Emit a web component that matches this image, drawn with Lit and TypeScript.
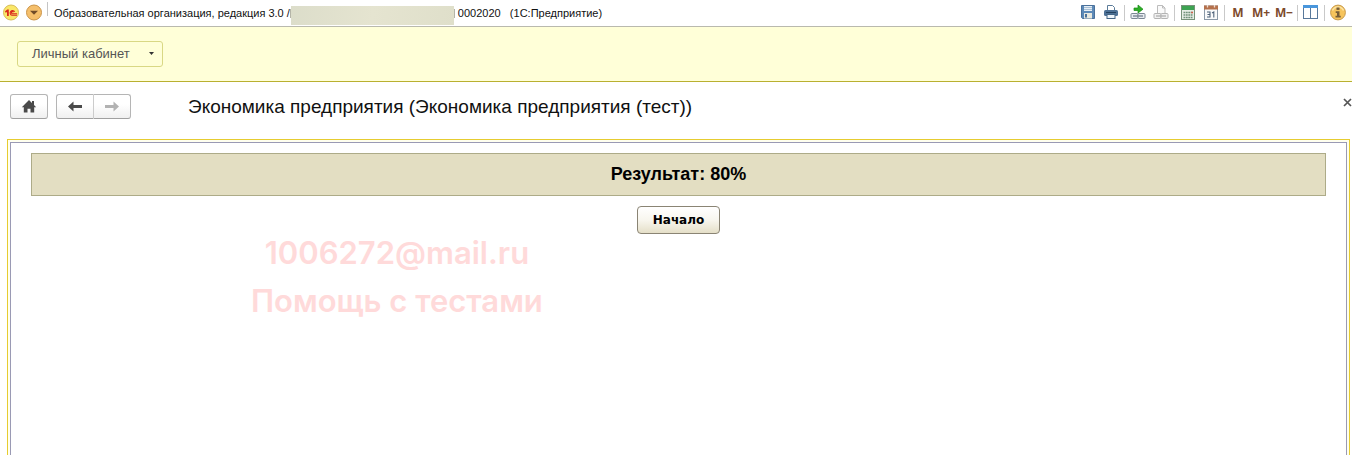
import { LitElement, html, css, svg, type TemplateResult, type SVGTemplateResult } from "lit";
import { customElement } from "lit/decorators.js";

interface Tool {
  label: string;
  icon?: SVGTemplateResult;
  text?: string;
}

const chain = (stroke: string, fill: string) => svg`
  <rect x="1" y="9.5" width="7" height="5" rx="1" fill=${fill} stroke=${stroke}/>
  <rect x="8" y="9.5" width="7" height="5" rx="1" fill=${fill} stroke=${stroke}/>
  <path d="M3 12h10" stroke=${stroke} stroke-width="1.4"/>`;

const toolGroups: Tool[][] = [
  [
    {
      label: "Сохранить",
      icon: svg`<path d="M1.5 .5h13v13h-12l-1-1z" fill="#5d8ab8" stroke="#4a719b"/>
        <rect x="4" y="1" width="8" height="5" fill="#e6eef5"/><path d="M4 2.5h8M4 4.500h8" stroke="#a9c0d5"/>
        <rect x="4" y="8" width="8" height="5.5" fill="#e9e9df"/><rect x="5" y="9" width="2" height="3.5" fill="#4a719b"/>`,
    },
    {
      label: "Печать",
      icon: svg`<path d="M4.500 6V.5h5l2 2V6" fill="#fff" stroke="#5b7b99"/>
        <rect x="1" y="5" width="14" height="6" rx="1.5" fill="#4d7196"/><path d="M3 7.500h10" stroke="#22415f"/>
        <rect x="4" y="9.500" width="8" height="4" fill="#eef5fb" stroke="#456787"/>`,
    },
  ],
  [
    {
      label: "Перейти по ссылке",
      icon: svg`<g transform="translate(0 -1)">${chain("#7b8794", "#e8ecf0")}<path d="M4 4h4V1l5 4.2L8 9V6.500H4z" fill="#2cae26" stroke="#178a14" stroke-width=".7"/></g>`,
    },
    {
      label: "Получить ссылку",
      icon: svg`<g transform="translate(0 -1)"><path d="M4.500 9V1.500h5l2.500 2.500V9" fill="#fafafa" stroke="#bcbcbc"/><path d="M9.500 1.500V4H12" fill="none" stroke="#bcbcbc"/>${chain("#b4b4b4", "#f0f0f0")}</g>`,
    },
  ],
  [
    {
      label: "Калькулятор",
      icon: svg`<rect x="1.5" y=".5" width="13" height="14" fill="#e7eee6" stroke="#78937a"/>
        <rect x="2" y="1" width="12" height="4" fill="#3da352"/>
        <path d="M3.500 7.500h9M3.500 10h9M3.500 12.500h9" stroke="#71917a" stroke-width="1.5" stroke-dasharray="1.8 .6"/>
        <path d="M11.200 7.500h1.800" stroke="#d65b4a" stroke-width="1.5"/>`,
    },
    {
      label: "Календарь",
      icon: svg`<rect x="1.5" y="1" width="13" height="13.5" fill="#f9fafb" stroke="#8b99a8"/>
        <rect x="1" y=".5" width="14" height="4" fill="#b5714c"/><path d="M4.500 0v2.500M11.500 0v2.500" stroke="#f1ddd0" stroke-width="1.3"/>
        <path d="M4 7h3v5H4M4.500 9.500H7M9 8l1.800-1v5.500" fill="none" stroke="#4d6179" stroke-width="1.1"/>`,
    },
  ],
  [
    { label: "Память", text: "M" },
    { label: "Прибавить к памяти", text: "M+" },
    { label: "Вычесть из памяти", text: "M−" },
  ],
  [
    {
      label: "Панели",
      icon: svg`<rect x=".5" y=".5" width="14" height="13" fill="#fff" stroke="#58789b"/>
        <rect x="0" y="0" width="15" height="3" fill="#4996dc"/><path d="M7.500 3v10" stroke="#58789b"/>`,
    },
  ],
  [
    {
      label: "О программе",
      icon: svg`<circle cx="8" cy="7.5" r="7.4" fill="#f6c45c" stroke="#c79a4d"/>
        <path d="M2.500 5.500a6 6 0 0 1 11 0" fill="none" stroke="#fbe3a4" stroke-width="1.5"/>
        <rect x="6.500" y="2.500" width="3" height="2.400" fill="#765d37"/><path d="M5.700 6.300h3.800v4.500h1.200v1.700H5.500v-1.700H7V8H5.700z" fill="#765d37"/>`,
    },
  ],
];

@customElement("app-titlebar")
class AppTitlebar extends LitElement {
  static styles = css`
    :host { display: block; font-family: "Liberation Sans", Arial, sans-serif; }
    .bar {
      display: flex; align-items: center; height: 26px; padding: 0 6px 0 3px;
      border-bottom: 1px solid #b9b9ae; background: #fff;
    }
    button { display: block; border: 0; padding: 0; background: none; width: 16px; height: 16px; }
    svg { display: block; width: 16px; height: 16px; overflow: visible; }
    .left { display: flex; gap: 7px; padding-right: 5px; }
    .divider { align-self: flex-start; width: 1px; height: 14px; margin-top: 2px; background: #c4c4c4; }
    .title { display: flex; align-items: center; flex: 1; min-width: 0; margin-left: 6px; font-size: 11px; color: #111; white-space: pre; }
    .redacted { width: 163px; height: 19px; margin-top: 5px; background: linear-gradient(100deg, #dcddca, #e5e4d0 50%, #dfdfca); }
    .edge { width: 1px; height: 9px; background: #b5b5a8; }
    .tail { margin-left: 3px; }
    .tools { display: flex; gap: 5px; }
    .group { display: flex; gap: 7px; }
    .group + .group { padding-left: 5px; border-left: 1px solid #c9c9c9; }
    .memory { font: 700 12px/16px "Open Sans", sans-serif; color: #7d4a2c; display: flex; justify-content: center; white-space: nowrap; }
  `;

  render() {
    return html`<header class="bar">
      <div class="left">
        <button aria-label="1С">
          <svg viewBox="0 0 16 16"><circle cx="8" cy="7.500" r="7.500" fill="#fae768" stroke="#d8bd59"/>
            <path d="M2 6.300 4.300 4.500h1.500v6.500H4V7l-1.400.8z" fill="#d92a1c"/>
            <path d="M11.700 6.800A2.400 2.400 0 1 0 9.300 10.300H14M10.500 7.300A1.100 1.100 0 1 0 9.400 8.800H14" fill="none" stroke="#d92a1c" stroke-width="1.100"/></svg>
        </button>
        <button aria-label="Главное меню">
          <svg viewBox="0 0 16 16"><circle cx="8" cy="7.500" r="7.500" fill="#f5bf6b" stroke="#cb9448"/>
            <path d="M4 5.800h8L8 9.700z" fill="#704b28"/></svg>
        </button>
      </div>
      <span class="divider"></span>
      <div class="title"><span>Образовательная организация, редакция 3.0 /</span><i class="edge"></i><span class="redacted"></span><i class="edge"></i><span class="tail">0002020   (1С:Предприятие)</span></div>
      <div class="tools">
        ${toolGroups.map(
          (group): TemplateResult => html`<div class="group">
            ${group.map((t) =>
              t.icon
                ? html`<button aria-label=${t.label}><svg viewBox="0 0 16 16">${t.icon}</svg></button>`
                : html`<button class="memory" title=${t.label}>${t.text}</button>`
            )}
          </div>`
        )}
      </div>
    </header>`;
  }
}

@customElement("app-root")
class AppRoot extends LitElement {
  static styles = css`
    :host {
      display: flex; flex-direction: column; min-height: 100vh; background: #fff; color: #111;
      font-family: "Liberation Sans", Arial, sans-serif;
    }
    button { font: inherit; margin: 0; box-sizing: border-box; }
    .sections { padding: 14px 17px; border-bottom: 1px solid #b9b030; background: #ffffd8; }
    .cabinet {
      display: flex; align-items: center; justify-content: space-between; width: 146px; height: 26px;
      padding: 0 8px 2px 14px; border: 1px solid #d9d884; border-radius: 3px; background: #ffffd8;
      color: #555; font-size: 13px;
    }
    .cabinet svg { width: 5px; height: 3px; }
    .command { display: flex; align-items: center; height: 25px; padding: 12px 0 20px 10px; }
    .nav {
      height: 25px; border: 1px solid #b5b5b5; border-bottom-color: #a0a0a0; border-radius: 3px; padding: 0;
      background: linear-gradient(#fff 40%, #f0f0f0); display: flex; align-items: center; justify-content: center; width: 38px;
    }
    .nav svg { width: 16px; height: 16px; }
    .pair { display: flex; margin-left: 8px; }
    .pair .back { border-radius: 3px 0 0 3px; border-right-color: #ccc; }
    .pair .forward { border-radius: 0 3px 3px 0; border-left: 0; width: 37px; }
    h1 { flex: 1; margin: 0 0 0 57px; font-size: 19px; font-weight: 400; line-height: 24px; }
    .close { align-self: flex-start; padding: 4px 0 0; border: 0; background: none; width: 9px; height: 13px; }
    .close svg { display: block; width: 9px; height: 9px; }
    .outer {
      flex: 1; display: flex; margin: 0 2px 0 7px; padding: 2px 2px 0; border: 1px solid #e6cc30; border-bottom: 0;
      background: #fffff0;
    }
    .inner {
      position: relative; flex: 1; display: flex; flex-direction: column; align-items: center; gap: 10px;
      padding: 10px 20px 0; border: 1px solid #9a9ab4; border-bottom: 0; background: #fff;
    }
    .result {
      align-self: stretch; margin: 0; border: 1px solid #adab88; background: #e3dec2; color: #000;
      font-size: 18px; font-weight: 700; line-height: 41px; text-align: center;
    }
    .start {
      width: 83px; height: 28px; padding: 0; border: 1px solid #8a8474; border-radius: 4px;
      background: linear-gradient(#fff, #f8f6ee 50%, #e5dfc8); color: #000;
      font: 700 12px "DejaVu Sans", Verdana, sans-serif;
    }
    .watermark {
      position: absolute; left: 240px; top: 86px; text-align: center; pointer-events: none;
      color: #ffdada; font: 600 31px/48px Inter, sans-serif;
    }
  `;

  render() {
    return html`
      <app-titlebar></app-titlebar>
      <nav class="sections">
        <button class="cabinet">Личный кабинет<svg viewBox="0 0 5 3"><path d="M0 0h5L2.500 3z" fill="#333"/></svg></button>
      </nav>
      <div class="command">
        <button class="nav" aria-label="Домой">
          <svg viewBox="0 0 16 16"><path d="M8 1 .8 8.200h2V13.500h3.700V9.700h3v3.800h3.700V8.200h2L13 6V2h-2v2z" fill="#4a4a4a"/></svg>
        </button>
        <div class="pair">
          <button class="nav back" aria-label="Назад">
            <svg viewBox="0 0 16 16"><path d="M1 7.500 6.500 2.500V6H15v3H6.500v3.500z" fill="#4a4a4a"/></svg>
          </button>
          <button class="nav forward" aria-label="Вперёд">
            <svg viewBox="0 0 16 16"><path d="M15 7.500 9.500 2.500V6H1v3h8.500v3.500z" fill="#b2b2b2"/></svg>
          </button>
        </div>
        <h1>Экономика предприятия (Экономика предприятия (тест))</h1>
        <button class="close" aria-label="Закрыть">
          <svg viewBox="0 0 9 9"><path d="M1 1l7 7M8 1l-7 7" stroke="#555" stroke-width="1.700"/></svg>
        </button>
      </div>
      <main class="outer">
        <section class="inner">
          <h2 class="result">Результат: 80%</h2>
          <button class="start">Начало</button>
          <div class="watermark">1006272@mail.ru<br />Помощь с тестами</div>
        </section>
      </main>
    `;
  }
}
